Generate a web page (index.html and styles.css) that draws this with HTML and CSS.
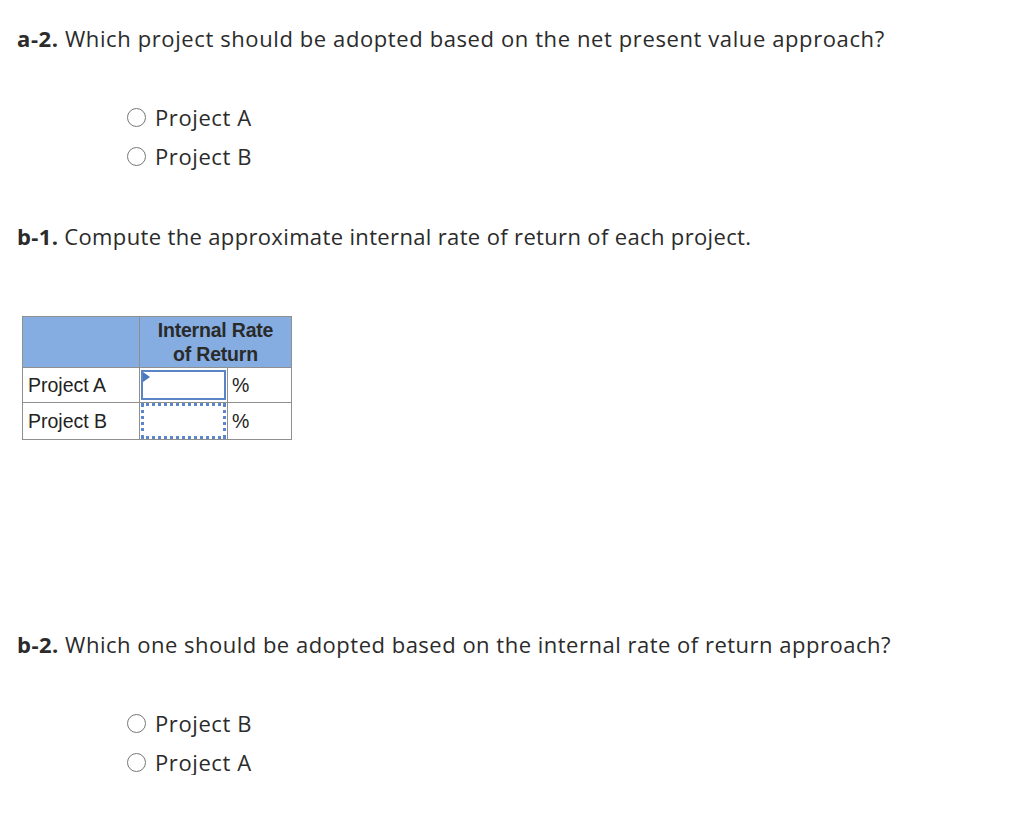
FILE: index.html
```html
<!DOCTYPE html>
<html>
<head>
<meta charset="utf-8">
<link rel="stylesheet" href="styles.css">
</head>
<body>
<div class="page">
  <p class="q q1"><b>a-2.</b> Which project should be adopted based on the net present value approach?</p>
  <div class="options o1">
    <label class="opt"><span class="radio"></span>Project A</label>
    <label class="opt"><span class="radio"></span>Project B</label>
  </div>
  <p class="q q2"><b>b-1.</b> Compute the approximate internal rate of return of each project.</p>
  <table class="irr">
    <colgroup>
      <col class="w1">
      <col class="w2">
      <col class="w3">
    </colgroup>
    <tr class="head">
      <th></th>
      <th colspan="2" class="hc">Internal Rate<br>of Return</th>
    </tr>
    <tr>
      <td class="c1">Project A</td>
      <td class="c2"><div class="inp active"><span class="flag"></span></div></td>
      <td class="c3">%</td>
    </tr>
    <tr>
      <td class="c1">Project B</td>
      <td class="c2"><div class="inp dotted"></div></td>
      <td class="c3">%</td>
    </tr>
  </table>
  <p class="q q3"><b>b-2.</b> Which one should be adopted based on the internal rate of return approach?</p>
  <div class="options o2">
    <label class="opt"><span class="radio"></span>Project B</label>
    <label class="opt"><span class="radio"></span>Project A</label>
  </div>
</div>
</body>
</html>
```
FILE: styles.css
```css
html, body {
  margin: 0;
  padding: 0;
  background: #ffffff;
}
.page {
  padding: 0 0 0 17px;
  font-family: "Open Sans", "Liberation Sans", sans-serif;
  color: #2b2b2b;
}
.q {
  margin: 0;
  font-size: 22px;
  letter-spacing: 0.6px;
  line-height: 24px;
}
.q b { font-weight: 700; }
.q1 { padding-top: 26px; }
.q2 { letter-spacing: 0.35px; }
.q3 { letter-spacing: 0.5px; }
.options {
  display: flex;
  flex-direction: column;
  gap: 13px;
  padding-left: 110px;
}
.o1 { margin-top: 54px; }
.opt {
  display: flex;
  align-items: center;
  gap: 9px;
  font-size: 22px;
  letter-spacing: 0.6px;
  line-height: 26px;
}
.radio {
  width: 19px;
  height: 19px;
  border: 1.5px solid #777;
  border-radius: 50%;
  box-sizing: border-box;
}
.q2 { margin-top: 55px; }
.irr {
  margin: 68px 0 0 5px;
  border-collapse: collapse;
  table-layout: fixed;
  width: 269px;
  font-family: "Liberation Sans", Arial, sans-serif;
  font-size: 19.5px;
  color: #222;
}
.w1 { width: 117px; }
.w2 { width: 88px; }
.w3 { width: 64px; }
.irr th, .irr td {
  border: 1.5px solid #8f8f8f;
  padding: 0;
}
.irr .head th {
  background: #85ade1;
  height: 50px;
  font-weight: 700;
  line-height: 24px;
  letter-spacing: -0.2px;
  color: #2a2a2a;
}
.irr td { height: 34px; }
.irr .c1 { padding-left: 5px; text-align: left; }
.irr td.c2 { padding: 0 1px; }
.irr td.c3 { padding-left: 4px; }
.inp {
  height: 30px;
  box-sizing: border-box;
  position: relative;
}
.inp.active { border: 2px solid #5b84c4; }
.inp.dotted { border: 3px dotted #5b86cc; height: 36px; }
.flag {
  position: absolute;
  left: 0;
  top: 0;
  width: 0;
  height: 0;
  border-top: 5px solid transparent;
  border-bottom: 5px solid transparent;
  border-left: 7px solid #4a78c2;
}
.q3 { margin-top: 192px; }
.o2 { margin-top: 54px; }
```
